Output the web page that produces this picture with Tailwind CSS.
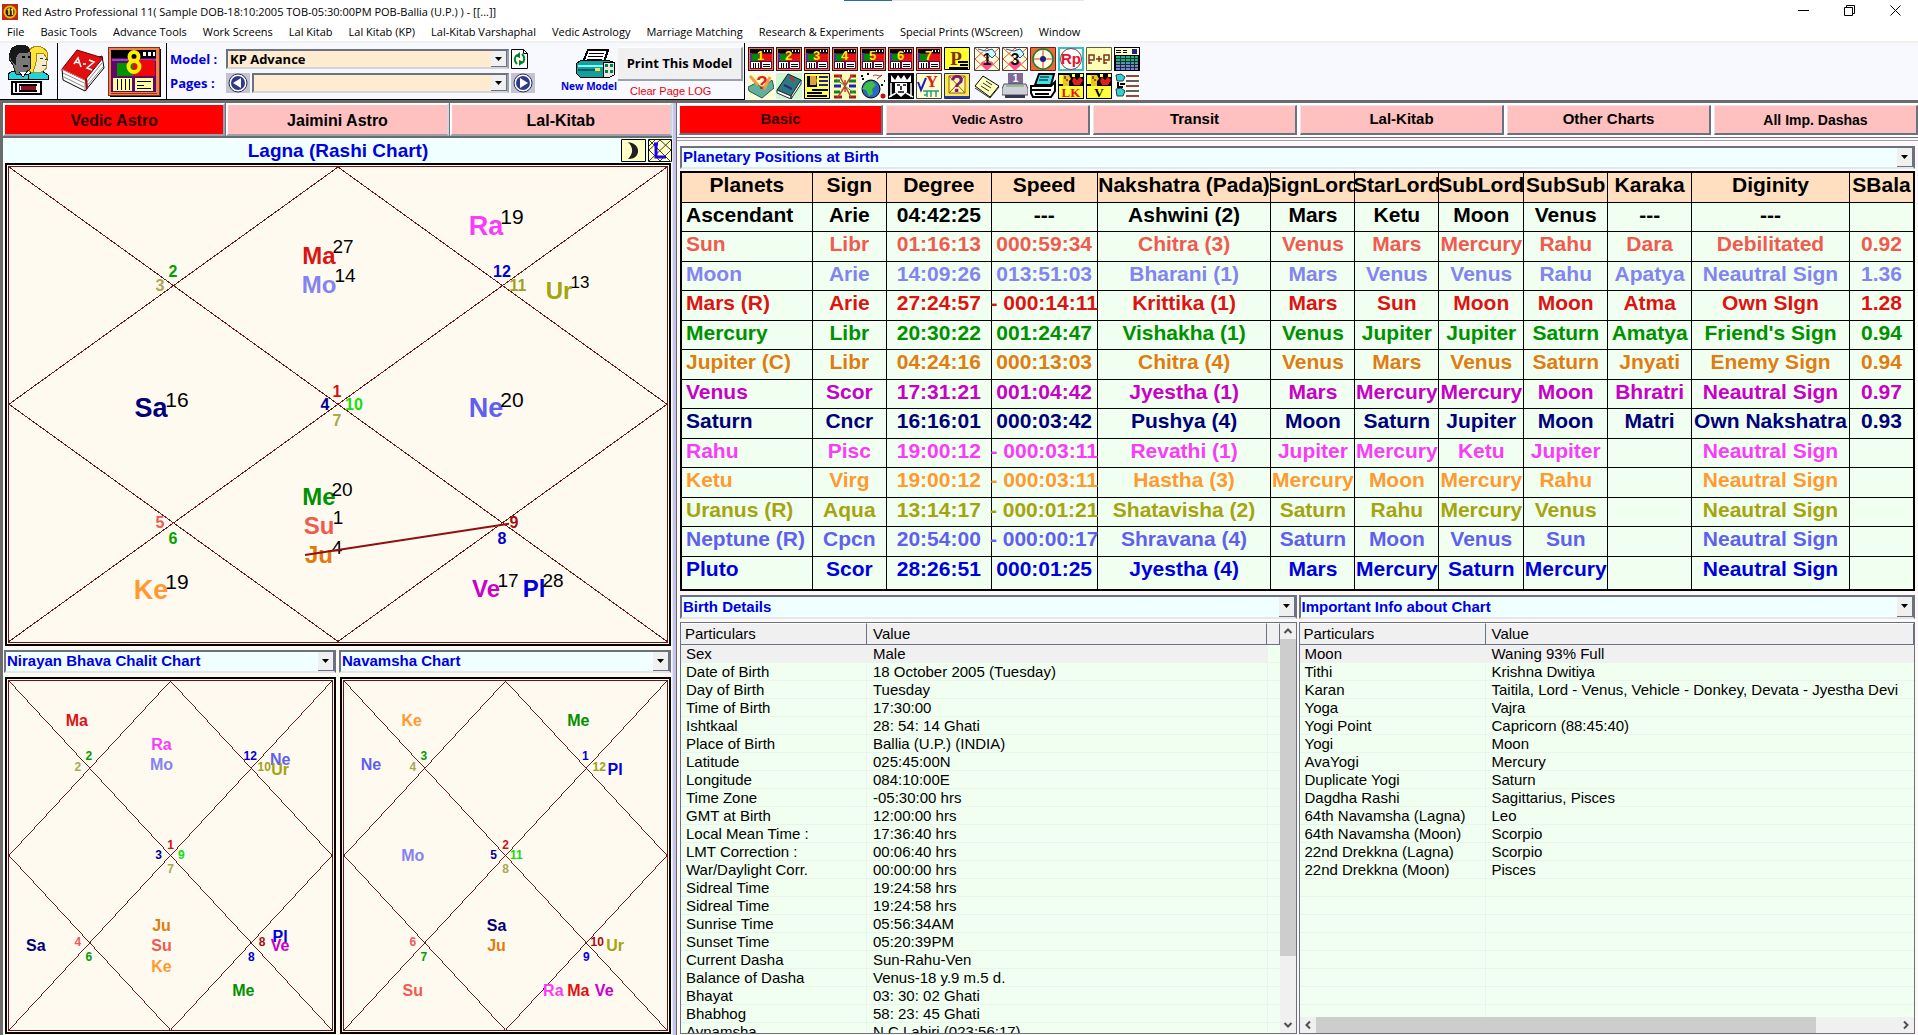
<!DOCTYPE html>
<html lang="en">
<head>
<meta charset="utf-8">
<title>Red Astro Professional 11</title>
<script src="https://cdn.jsdelivr.net/npm/@tailwindcss/browser@4"></script>
</head>
<body class="h-screen overflow-hidden flex flex-col bg-white text-black font-['Liberation_Sans',Arial,sans-serif]">

<header class="relative font-['Open_Sans','Noto_Sans',sans-serif] text-[11px]">
  <div class="absolute top-0 left-[44%] w-60 h-px bg-gray-200"><div class="w-12 h-px bg-[#2a6aa8]"></div></div>
  <div class="flex h-6">
    <svg class="ml-[2px] mt-1 size-4" viewBox="0 0 16 16"><rect width="16" height="16" fill="#c02a10"/><circle cx="8" cy="8" r="6.500" fill="#e8b818"/><circle cx="8" cy="8" r="4.500" fill="#382008"/><path d="M5.500 6l1.500-1v6M9 6l1.500-1v6" stroke="#ffe04a" stroke-width="1.500" fill="none"/></svg>
    <h1 class="ml-1 grow leading-6">Red Astro Professional 11( Sample DOB-18:10:2005 TOB-05:30:00PM POB-Ballia (U.P.) ) - [[...]]</h1>
    <div class="flex h-5">
      <button aria-label="Minimize" class="w-[46px] grid place-items-center"><svg class="size-[11px]" viewBox="0 0 11 11"><path d="M0 5.500h11" stroke="#000"/></svg></button>
      <button aria-label="Restore" class="w-[46px] grid place-items-center"><svg class="size-[11px]" viewBox="0 0 11 11"><path d="M.5 2.500h8v8h-8zM2.500 2.500v-2h8v8h-2" stroke="#000" fill="none"/></svg></button>
      <button aria-label="Close" class="w-[46px] grid place-items-center"><svg class="size-[11px]" viewBox="0 0 11 11"><path d="M.5.500l10 10M10.500.500l-10 10" stroke="#000"/></svg></button>
    </div>
  </div>
  <nav class="flex items-center gap-4 h-[19px] pl-[7px] border-b-2 border-[#f0f0f0] whitespace-nowrap">
    <a href="#">File</a><a href="#">Basic Tools</a><a href="#">Advance Tools</a><a href="#">Work Screens</a><a href="#">Lal Kitab</a><a href="#">Lal Kitab (KP)</a><a href="#">Lal-Kitab Varshaphal</a><a href="#">Vedic Astrology</a><a href="#">Marriage Matching</a><a href="#">Research &amp; Experiments</a><a href="#">Special Prints (WScreen)</a><a href="#">Window</a>
  </nav>
</header>

<div class="flex h-[59px] bg-[#f8f8ff] font-['Open_Sans','Noto_Sans',sans-serif]">
  <div class="w-[58px] h-[57px] border-r border-b border-black pl-2 pt-[2px]">
    <button aria-label="Horoscopes" class="block">
      <svg class="w-[42px] h-[50px]" viewBox="0 0 42 50" shape-rendering="crispEdges">
        <path d="M0 34v-5l5-3h8l7 4v4z" fill="#18d8e0" stroke="#000"/>
        <path d="M20 34v-4l5-4h9l6 4v4z" fill="#18d8e0" stroke="#000"/>
        <path d="M20 6c4-7 14-5 18 0l2 8-2 4 1 5-7 5-9-1z" fill="#f4ecc8" stroke="#b09020"/>
        <path d="M22 5c5-6 14-4 17 2l1 8-4-6-7-1-1 9-3 11-4-2z" fill="#ffe438" stroke="#a88810"/>
        <path d="M32 13h3M37 14h3M34 20h4" stroke="#303030"/>
        <path d="M2 8C3 0 14-2 20 2l3 8-1 14-6 5H8L5 20 1 14z" fill="#787878" stroke="#202020"/>
        <path d="M1 9C2 0 16-3 22 4l-2 4H11l-3 5v7l-4-3z" fill="#181818"/>
        <path d="M14 12h3M20 12h2M15 21h5" stroke="#000" stroke-width="2"/>
        <path d="M11 27l4 5 4-5" fill="#fff" stroke="#000"/>
        <path d="M4 36.500h29v12H4z" fill="#fff" stroke="#000" stroke-width="2"/>
        <path d="M8 38v9M11 40h18M11 46h18" stroke="#000" stroke-width="2"/><path d="M13 41h15v4H13z" fill="#901018"/><path d="M11 40v6" stroke="#101080"/>
      </svg>
    </button>
  </div>
  <div class="flex gap-[3px] w-[109px] h-[57px] border-r border-b border-black pl-[3px] pt-1">
    <button aria-label="Book" class="mt-[2px] self-start">
      <svg class="w-[44px] h-[43px]" viewBox="0 0 44 43">
        <path d="M1 20l1 11 22 11 19-23-2-12z" fill="#fff" stroke="#000"/>
        <path d="M2 24l21 10M3 28l20 10M25 34l16-20M25 38l17-20M24 33v8" stroke="#888" stroke-width="1"/>
        <path d="M1 20L16 1l26 8-18 22z" fill="#e01010" stroke="#700000"/>
        <path d="M1 20l23 11" stroke="#ff6060"/>
        <path d="M13 15l4-6 3 9M14 13l5 1M22 15h3M28 11l5 2-7 6 5 2" fill="none" stroke="#fff" stroke-width="1.500"/>
        <path d="M24 31l1 11 2-3-1-10z" fill="#a00808"/>
      </svg>
    </button>
    <button aria-label="Screen 8" class="self-start">
      <svg class="w-[53px] h-[50px]" viewBox="0 0 53 50" shape-rendering="crispEdges">
        <path d="M2 2h51v48H2z" fill="#000"/><path d="M0 0h51v48H0z" fill="#f08050" stroke="#803018"/>
        <path d="M3 3h45v8H3z"/><path d="M35 5h3v4h-3zM40 5h3v4h-3zM45 5h2v4h-2z" fill="#fff"/>
        <path d="M3 11h45v34H3z" fill="#600868"/><path d="M4 12h44v2H4z" fill="#9048c0"/>
        <path d="M9 16h16v13H9z" fill="#009000"/><path d="M25 13h22v16H25z" fill="#f00808"/>
        <path d="M5 31h19v13H5zM27 31h18v13H27z" fill="#ffffa0"/>
        <path d="M9.500 32v11M13.500 32v11M17.500 32v11M21.500 32v11M29 34.500h14M29 38.500h7M29 41.500h14" stroke="#000"/>
        <path d="M3 46h46" stroke="#a03020"/>
        <g fill="none" stroke="#ffee00" stroke-width="4" shape-rendering="auto"><circle cx="26" cy="9.500" r="4.500"/><circle cx="26" cy="19.500" r="5.500"/></g>
      </svg>
    </button>
  </div>
  <div class="flex w-[578px] h-[57px] border-r border-b border-black pl-[3px]">
    <div class="w-[390px] pt-[6px]">
      <div class="flex gap-[2px] h-5 mb-1 items-center">
        <label for="model" class="w-[54px] text-[13px] leading-4 font-bold text-[#0000e0]">Model :</label>
        <div class="flex w-[283px] h-5 bg-[#ffebd0] border-2 border-t-gray-500 border-l-gray-500 border-r-gray-400 border-b-gray-300">
          <select id="model" class="appearance-none grow px-[2px] text-[13px] leading-4 font-bold"><option>KP Advance</option></select>
          <span class="pointer-events-none grid place-items-center w-4 bg-[#f0f0f0] border-r border-b border-gray-500"><svg class="w-[7px] h-1" viewBox="0 0 7 4"><path d="M0 0h7L3.500 4z"/></svg></span>
        </div>
        <button aria-label="Refresh"><svg class="w-[17px] h-5" viewBox="0 0 17 20"><path d="M.5.500h12l4 4v15H.5z" fill="#fff" stroke="#000"/><path d="M12.500.500v4h4" fill="none" stroke="#000"/><path d="M6 15c-3-3-3-7 0-9M11 5c3 3 3 7 0 9" stroke="#008020" stroke-width="2" fill="none"/><path d="M4 7l5-4v6zM13 13l-5 4v-6z" fill="#008020"/></svg></button>
      </div>
      <div class="flex gap-[2px] h-5 items-center">
        <label for="pages" class="w-[54px] text-[13px] leading-4 font-bold text-[#0000e0]">Pages :</label>
        <button aria-label="Previous page"><svg class="w-6 h-5" viewBox="0 0 24 20"><path d="M0 0h24v20H0z" fill="#c4c4d0"/><circle cx="12" cy="10" r="9" fill="#fff" stroke="#282868"/><circle cx="12" cy="10" r="7" fill="#303888"/><path d="M15 5v10L7 10z" fill="#fff"/></svg></button>
        <div class="flex w-[257px] h-5 bg-[#ffebd0] border-2 border-t-gray-500 border-l-gray-500 border-r-gray-400 border-b-gray-300">
          <select id="pages" class="appearance-none grow px-[2px] text-[13px] leading-4 font-bold"><option></option></select>
          <span class="pointer-events-none grid place-items-center w-4 bg-[#f0f0f0] border-r border-b border-gray-500"><svg class="w-[7px] h-1" viewBox="0 0 7 4"><path d="M0 0h7L3.500 4z"/></svg></span>
        </div>
        <button aria-label="Next page"><svg class="w-6 h-5" viewBox="0 0 24 20"><path d="M0 0h24v20H0z" fill="#c4c4d0"/><circle cx="12" cy="10" r="9" fill="#fff" stroke="#282868"/><circle cx="12" cy="10" r="7" fill="#303888"/><path d="M9 5v10l8-5z" fill="#fff"/></svg></button>
      </div>
    </div>
    <button class="flex flex-col items-center w-[58px] pt-[6px] text-[10px] leading-4 font-bold text-[#0000e0] whitespace-nowrap">
      <svg class="w-10 h-[29px] ml-3" viewBox="0 0 40 29" shape-rendering="crispEdges">
        <path d="M13 1h20l-4 12H8z" fill="#fff" stroke="#000" stroke-width="2"/><path d="M14 4h15M13 7h15M12 10h15" stroke="#000"/>
        <path d="M2 14l5-3h25l6 2v11l-5 4H5l-4-4z" fill="#10a0a0" stroke="#000"/><path d="M3 16h25v2H3z" fill="#80ffff"/><path d="M3 21h22" stroke="#005858" stroke-width="2"/><path d="M20 19h5v3h-5z" fill="#ffe040"/>
        <path d="M28 13h11v13l-4 2h-7z" fill="#e8e8e8" stroke="#000"/><path d="M30 15h3v3h-3zM35 15h3v3h-3zM30 21h3v3h-3zM35 21h3v3h-3z" fill="#008040"/>
      </svg>
      <span>New Model</span>
    </button>
    <div class="flex flex-col w-[126px] pt-1 items-start">
      <button class="w-[125px] h-[34px] bg-[#f0f0f0] border-r-2 border-b-2 border-t border-t-white border-gray-400 text-[13px] font-bold">Print This Model</button>
      <button class="ml-3 mt-1 text-[11px] leading-3 text-red-600 font-['Liberation_Sans',Arial,sans-serif]">Clear Page LOG</button>
    </div>
  </div>
  <div class="pt-1 pl-[3px]">
    <div id="icons1" class="flex gap-[2px] h-6"></div>
    <div id="icons2" class="flex gap-[2px] h-[26px] mt-[2px]"></div>
  </div>
</div>

<main class="grow min-h-0 grid grid-cols-[672fr_4px_1242fr] border-t-[3px] border-[#6b6b6b]">

  <section class="min-w-0 min-h-0 flex flex-col border-l-[3px] border-[#6b6b6b] bg-[#fffaf0]">
    <div class="grid grid-cols-3 gap-px h-[35px] border-b-2 border-[#6b6b6b] bg-gray-500 text-base font-bold">
      <button class="pt-[2px] bg-[#ff0000] border-2 border-t-white border-l-white border-r-gray-400 border-b-gray-400 text-[#300000]">Vedic Astro</button>
      <button class="pt-[2px] bg-[#ffc0c0] border-2 border-t-white border-l-white border-r-gray-300 border-b-gray-400">Jaimini Astro</button>
      <button class="pt-[2px] bg-[#ffc0c0] border-2 border-t-white border-l-white border-r-gray-300 border-b-gray-400">Lal-Kitab</button>
    </div>
    <div class="flex h-[25px] bg-[#f0ffff]">
      <h2 class="grow pl-[52px] text-center text-[19px] leading-[25px] font-bold text-[#0000e0]">Lagna (Rashi Chart)</h2>
      <button aria-label="Moon chart" class="mr-[2px]"><svg class="w-[25px] h-6" viewBox="0 0 25 24"><path d="M.5.500h24v22H.5z" fill="#ffffc8" stroke="#000"/><path d="M7 3c9 1 12 8 9 13-2 3-5 4-9 4 5-5 6-11 0-17z" fill="#202020"/></svg></button>
      <button aria-label="Lagna chart"><svg class="w-6 h-6" viewBox="0 0 24 24"><path d="M.5.500h23v22H.5z" fill="#ffffc8" stroke="#000"/><path d="M1 7l6-6M1 1l22 22M23 1L1 22M12 1l11 10-11 11L1 11z" fill="none" stroke="#404020" stroke-width="1"/><path d="M8 5v13h10M6 5h4" stroke="#2000f0" stroke-width="3" fill="none"/></svg></button>
    </div>
    <div class="grow-[479] basis-0 min-h-0 ml-[2px] mr-px border-2 border-black p-px"><div id="lagna" class="relative h-full border border-[#701010]"></div></div>
    <div class="grid grid-cols-2 gap-[3px] mt-1 mb-1 px-px">
      <div class="flex h-[23px] bg-[#f0ffff] border-2 border-t-gray-500 border-l-gray-500 border-r-gray-500 border-b-gray-200">
        <select aria-label="Left chart" class="appearance-none grow pl-px text-[15px] leading-4 font-bold text-[#0000e0]"><option>Nirayan Bhava Chalit Chart</option></select>
        <span class="pointer-events-none grid place-items-center w-4 bg-[#f0f0f0] border-r border-b border-gray-500"><svg class="w-[7px] h-1" viewBox="0 0 7 4"><path d="M0 0h7L3.500 4z"/></svg></span>
      </div>
      <div class="flex h-[23px] bg-[#f0ffff] border-2 border-t-gray-500 border-l-gray-500 border-r-gray-500 border-b-gray-200">
        <select aria-label="Right chart" class="appearance-none grow pl-px text-[15px] leading-4 font-bold text-[#0000e0]"><option>Navamsha Chart</option></select>
        <span class="pointer-events-none grid place-items-center w-4 bg-[#f0f0f0] border-r border-b border-gray-500"><svg class="w-[7px] h-1" viewBox="0 0 7 4"><path d="M0 0h7L3.500 4z"/></svg></span>
      </div>
    </div>
    <div class="grow-[359] basis-0 min-h-0 grid grid-cols-2 gap-1 pl-[2px] pr-px pb-px">
      <div class="border-2 border-black p-px"><div id="bhava" class="relative h-full border border-[#701010]"></div></div>
      <div class="border-2 border-black p-px"><div id="navamsha" class="relative h-full border border-[#701010]"></div></div>
    </div>
  </section>

  <div class="bg-[#c4c4ec] border-l border-gray-200"></div>

  <section class="min-w-0 min-h-0 flex flex-col border-l border-[#6b6b6b] bg-[#fff8f8]">
    <div class="grid grid-cols-6 gap-[3px] h-[35px] pl-[2px] pt-[2px] pb-[2px] bg-white border-b border-gray-500 text-[15px] font-bold">
      <button class="bg-[#ff0000] border border-t-gray-200 border-l-gray-200 border-r-gray-500 border-b-gray-500 border-r-2 border-b-2 text-[#300000]">Basic</button>
      <button class="bg-[#ffc0c0] border border-t-gray-200 border-l-gray-200 border-r-gray-500 border-b-gray-500 border-r-2 border-b-2 text-[13px]">Vedic Astro</button>
      <button class="bg-[#ffc0c0] border border-t-gray-200 border-l-gray-200 border-r-gray-500 border-b-gray-500 border-r-2 border-b-2">Transit</button>
      <button class="bg-[#ffc0c0] border border-t-gray-200 border-l-gray-200 border-r-gray-500 border-b-gray-500 border-r-2 border-b-2">Lal-Kitab</button>
      <button class="bg-[#ffc0c0] border border-t-gray-200 border-l-gray-200 border-r-gray-500 border-b-gray-500 border-r-2 border-b-2">Other Charts</button>
      <button class="bg-[#ffc0c0] border border-t-gray-200 border-l-gray-200 border-r-gray-500 border-b-gray-500 border-r-2 border-b-2 text-sm">All Imp. Dashas</button>
    </div>
    <div class="grow min-h-0 flex flex-col mt-[2px] pt-[5px] pl-[3px] pr-[3px] pb-px border-t border-gray-400">
      <div class="flex h-6 bg-[#f0ffff] border-2 border-t-gray-500 border-l-gray-500 border-r-gray-500 border-b-gray-200">
        <select aria-label="Table shown" class="appearance-none grow pl-px text-[15px] leading-4 font-bold text-[#0000e0]"><option>Planetary Positions at Birth</option></select>
        <span class="pointer-events-none grid place-items-center w-4 bg-[#f0f0f0] border-r border-b border-gray-500"><svg class="w-[7px] h-1" viewBox="0 0 7 4"><path d="M0 0h7L3.500 4z"/></svg></span>
      </div>
      <div class="mt-[2px] border-2 border-black bg-[#f0fff0]">
        <table id="planets" class="w-full table-fixed border-separate border-spacing-0 text-[21px] leading-6 font-bold whitespace-nowrap"></table>
      </div>
      <div class="grow min-h-0 grid grid-cols-2 gap-x-[2px] grid-rows-[24px_1fr] mt-1">
        <div class="flex bg-[#f0ffff] border-2 border-t-gray-500 border-l-gray-500 border-r-gray-500 border-b-gray-200">
          <select aria-label="Left list" class="appearance-none grow pl-px text-[15px] leading-4 font-bold text-[#0000e0]"><option>Birth Details</option></select>
          <span class="pointer-events-none grid place-items-center w-4 bg-[#f0f0f0] border-r border-b border-gray-500"><svg class="w-[7px] h-1" viewBox="0 0 7 4"><path d="M0 0h7L3.500 4z"/></svg></span>
        </div>
        <div class="flex bg-[#f0ffff] border-2 border-t-gray-500 border-l-gray-500 border-r-gray-500 border-b-gray-200">
          <select aria-label="Right list" class="appearance-none grow pl-px text-[15px] leading-4 font-bold text-[#0000e0]"><option>Important Info about Chart</option></select>
          <span class="pointer-events-none grid place-items-center w-4 bg-[#f0f0f0] border-r border-b border-gray-500"><svg class="w-[7px] h-1" viewBox="0 0 7 4"><path d="M0 0h7L3.500 4z"/></svg></span>
        </div>
        <div class="flex min-h-0 mt-[3px] border border-gray-500 bg-[#f0fff0] overflow-hidden">
          <div class="grow min-w-0 overflow-hidden"><table id="birth" class="w-full table-fixed border-separate border-spacing-0 text-[15px] leading-[17px] whitespace-nowrap"></table></div>
          <div class="flex flex-col w-4 bg-[#f0f0f0]">
            <svg class="w-4 h-4" viewBox="0 0 16 16"><path d="M4.500 10L8 6.500l3.500 3.500" fill="none" stroke="#505050" stroke-width="2"/></svg>
            <div class="grow"><div class="h-[84%] bg-[#cdcdcd]"></div></div>
            <svg class="w-4 h-4" viewBox="0 0 16 16"><path d="M4.500 6L8 9.500 11.500 6" fill="none" stroke="#505050" stroke-width="2"/></svg>
          </div>
        </div>
        <div class="flex flex-col min-h-0 mt-[3px] border border-gray-500 bg-[#f0fff0] overflow-hidden">
          <div class="grow min-h-0 overflow-hidden"><table id="info" class="w-full table-fixed border-separate border-spacing-0 text-[15px] leading-[17px] whitespace-nowrap"></table></div>
          <div class="flex h-4 bg-[#f0f0f0]">
            <svg class="w-4 h-4" viewBox="0 0 16 16"><path d="M10 4.500L6.500 8l3.500 3.500" fill="none" stroke="#505050" stroke-width="2"/></svg>
            <div class="grow"><div class="h-4 w-[86%] bg-[#cdcdcd]"></div></div>
            <svg class="w-4 h-4" viewBox="0 0 16 16"><path d="M6 4.500L9.500 8 6 11.500" fill="none" stroke="#505050" stroke-width="2"/></svg>
          </div>
        </div>
      </div>
    </div>
  </section>
</main>

<script>
const $ = id => document.getElementById(id);
const C = { Su:'#f05a50', Mo:'#8484f0', Ma:'#dc1414', Me:'#009000', Ju:'#e07c10', Ve:'#c800c8', Sa:'#000078',
  Ra:'#fa3cfa', Ke:'#ff9932', Ur:'#a4a410', Ne:'#6060f0', Pl:'#0000dc', As:'#000000' };

/* North-Indian charts: labels carry a centre point on the chart's design grid (w x h) */
function chart(id, w, h, items, aspect) {
  const label = ([t, x, y, cls, color]) =>
    `<span class="absolute -translate-x-1/2 -translate-y-1/2 leading-none ${cls}" style="left:${x / w * 100}%;top:${y / h * 100}%;color:${color || C[t]}">${t}</span>`;
  $(id).innerHTML =
    `<svg class="absolute inset-0 w-full h-full" viewBox="0 0 ${w} ${h}" preserveAspectRatio="none" fill="none" stroke="#701818" shape-rendering="crispEdges">
      <path d="M0 0L${w} ${h}M${w} 0L0 ${h}M${w / 2} 0L${w} ${h / 2}L${w / 2} ${h}L0 ${h / 2}Z"/></svg>` +
    items.map(label).join('') + (aspect ? `<svg class="absolute inset-0 w-full h-full" viewBox="0 0 ${w} ${h}" preserveAspectRatio="none"><path d="${aspect}" stroke="#901010" stroke-width="2"/></svg>` : '');
}
const L = 'text-[27px] font-bold', M = 'text-2xl font-bold', N = 'text-base font-bold', D = 'text-[21px]', E = 'text-[19px]', F = 'text-[17px]', K = '#000';
const green = '#00a000', olive = '#a8a850', lime = '#10e010', brown = '#a01010', blue = '#0000d8', navy = '#000090', red = '#d81010', coral = '#f05858';
chart('lagna', 658, 472, [
  ['Ra',477,58,L],['19',503,48,D,K],['Ma',310,88,M],['27',334,78,E,K],['Mo',310,117,M],['14',336,107,E,K],
  ['Ur',550,123,M],['13',571,114,F,K],['Sa',142,239,L],['16',168,230,D,K],['Ne',477,239,L],['20',503,230,D,K],
  ['Me',310,328,M],['20',333,320,E,K],['Su',310,357,M],['1',329,348,E,K],['Ju',310,386,M],['4',328,378,E,K],
  ['Ke',142,420,L],['19',168,411,D,K],['Ve',477,419,M],['17',499,410,E,K],['Pl',525,419,M],['28',544,410,E,K],
  ['2',164,104,N,green],['3',151,118,N,olive],['12',493,104,N,blue],['11',509,118,N,'#a0a020'],
  ['1',328,223,N,red],['4',316,236,N,navy],['10',345,236,N,lime],['7',328,252,N,olive],
  ['5',151,354,N,coral],['6',164,370,N,green],['9',505,354,N,brown],['8',493,370,N,blue],
], 'M296 386L500 355');
const P = 'text-base font-bold', S = 'text-xs font-bold';
const houses = n => [
  [n[0],80,76,S,green],[n[1],69,87,S,olive],[n[2],242,76,S,blue],[n[3],256,87,S,'#a0a020'],
  [n[4],162,165,S,red],[n[5],150,175,S,navy],[n[6],173,175,S,lime],[n[7],162,189,S,olive],
  [n[8],69,263,S,coral],[n[9],80,278,S,green],[n[10],254,263,S,brown],[n[11],243,278,S,blue]];
chart('bhava', 324, 351, [...houses(['2','2','12','10','1','3','9','7','4','6','8','8']),
  ['Ma',68,40,P],['Ra',153,64,P],['Mo',153,85,P],['Ne',272,80,P],['Ur',272,90,P],
  ['Ju',153,246,P],['Su',153,267,P],['Ke',153,288,P],['Sa',27,267,P],['Pl',272,257,P],['Ve',272,267,P],['Me',235,312,P]]);
chart('navamsha', 324, 351, [...houses(['3','4','1','12','2','5','11','8','6','7','10','9']),
  ['Ke',68,40,P],['Me',235,40,P],['Ne',27,85,P],['Pl',272,90,P],['Mo',69,176,P],
  ['Sa',153,246,P],['Ju',153,267,P],['Ur',272,267,P],['Su',69,312,P],['Ra',210,312,P],['Ma',235,312,P],['Ve',261,312,P]]);

/* Planet table */
const cols = [['Planets',131],['Sign',74],['Degree',105],['Speed',106],['Nakshatra (Pada)',174],['SignLord',84],['StarLord',84],['SubLord',85],['SubSub',84],['Karaka',84],['Diginity',158],['SBala',63]];
const total = cols.reduce((s, c) => s + c[1], 0);
const rows = `As|Ascendant|Arie|04:42:25|---|Ashwini (2)|Mars|Ketu|Moon|Venus|---|---|
Su|Sun|Libr|01:16:13|000:59:34|Chitra (3)|Venus|Mars|Mercury|Rahu|Dara|Debilitated|0.92
Mo|Moon|Arie|14:09:26|013:51:03|Bharani (1)|Mars|Venus|Venus|Rahu|Apatya|Neautral Sign|1.36
Ma|Mars (R)|Arie|27:24:57|- 000:14:11|Krittika (1)|Mars|Sun|Moon|Moon|Atma|Own SIgn|1.28
Me|Mercury|Libr|20:30:22|001:24:47|Vishakha (1)|Venus|Jupiter|Jupiter|Saturn|Amatya|Friend's Sign|0.94
Ju|Jupiter (C)|Libr|04:24:16|000:13:03|Chitra (4)|Venus|Mars|Venus|Saturn|Jnyati|Enemy Sign|0.94
Ve|Venus|Scor|17:31:21|001:04:42|Jyestha (1)|Mars|Mercury|Mercury|Moon|Bhratri|Neautral Sign|0.97
Sa|Saturn|Cncr|16:16:01|000:03:42|Pushya (4)|Moon|Saturn|Jupiter|Moon|Matri|Own Nakshatra|0.93
Ra|Rahu|Pisc|19:00:12|- 000:03:11|Revathi (1)|Jupiter|Mercury|Ketu|Jupiter||Neautral Sign|
Ke|Ketu|Virg|19:00:12|- 000:03:11|Hastha (3)|Mercury|Moon|Mercury|Rahu||Neautral Sign|
Ur|Uranus (R)|Aqua|13:14:17|- 000:01:21|Shatavisha (2)|Saturn|Rahu|Mercury|Venus||Neautral Sign|
Ne|Neptune (R)|Cpcn|20:54:00|- 000:00:17|Shravana (4)|Saturn|Moon|Venus|Sun||Neautral Sign|
Pl|Pluto|Scor|28:26:51|000:01:25|Jyestha (4)|Mars|Mercury|Saturn|Mercury||Neautral Sign|`.split('\n').map(r => r.split('|'));
$('planets').innerHTML =
  `<colgroup>${cols.map(c => `<col style="width:${c[1] / total * 100}%">`).join('')}</colgroup>
  <thead><tr class="bg-[#ffdfc0]">${cols.map(c => `<th class="h-[30px] p-0 align-top border-r border-b border-black last:border-r-0"><div class="flex justify-center overflow-hidden">${c[0]}</div></th>`).join('')}</tr></thead>
  <tbody>${rows.map(([k, ...v], i) => `<tr class="${i == 12 ? 'h-8' : i % 2 ? 'h-[30px]' : 'h-[29px]'}" style="color:${C[k]}">${v.map((t, j) =>
    `<td class="p-0 align-top border-r border-black last:border-r-0 ${i == 12 ? '' : 'border-b'}"><div class="flex ${j ? 'justify-center' : 'pl-1'}">${t}</div></td>`).join('')}</tr>`).join('')}</tbody>`;

/* Particulars / Value lists */
function list(id, data, fill, tail) {
  const lines = data.split('\n').map(r => r.split('|'));
  while (lines.length < fill) lines.push(['', '']);
  const th = 'h-[22px] pl-1 text-left font-normal bg-[#f0f0f0] border-r border-b border-t border-t-white border-r-gray-500 border-b-gray-500';
  $(id).innerHTML = `<colgroup><col class="w-[186px]"><col>${tail ? '<col class="w-[13px]">' : ''}</colgroup>
    <thead><tr><th class="${th}">Particulars</th><th class="${th}"><span class="pl-[2px]">Value</span></th>${tail ? `<th class="${th}"></th>` : ''}</tr></thead>
    <tbody>${lines.map(([a, b], i) => `<tr class="h-[18px]">
      <td class="p-0 pl-[5px] border-r border-b border-[#e8f4ec] ${i ? '' : 'bg-[#f0f0f0]'}">${a}</td>
      <td class="p-0 pl-[6px] border-b border-[#e8f4ec] ${i ? '' : 'bg-[#f0f0f0]'}">${b}</td>${tail ? '<td class="p-0 border-b border-l border-[#e8f4ec]"></td>' : ''}</tr>`).join('')}</tbody>`;
}
list('birth', `Sex|Male
Date of Birth|18 October 2005 (Tuesday)
Day of Birth|Tuesday
Time of Birth|17:30:00
Ishtkaal|28: 54: 14 Ghati
Place of Birth|Ballia (U.P.) (INDIA)
Latitude|025:45:00N
Longitude|084:10:00E
Time Zone|-05:30:00 hrs
GMT at Birth|12:00:00 hrs
Local Mean Time :|17:36:40 hrs
LMT Correction :|00:06:40 hrs
War/Daylight Corr.|00:00:00 hrs
Sidreal Time|19:24:58 hrs
Sidreal Time|19:24:58 hrs
Sunrise Time|05:56:34AM
Sunset Time|05:20:39PM
Current Dasha|Sun-Rahu-Ven
Balance of Dasha|Venus-18 y.9 m.5 d.
Bhayat|03: 30: 02 Ghati
Bhabhog|58: 23: 45 Ghati
Aynamsha|N.C.Lahiri (023:56:17)`, 22, true);
list('info', `Moon|Waning 93% Full
Tithi|Krishna Dwitiya
Karan|Taitila, Lord - Venus, Vehicle - Donkey, Devata - Jyestha Devi
Yoga|Vajra
Yogi Point|Capricorn (88:45:40)
Yogi|Moon
AvaYogi|Mercury
Duplicate Yogi|Saturn
Dagdha Rashi|Sagittarius, Pisces
64th Navamsha (Lagna)|Leo
64th Navamsha (Moon)|Scorpio
22nd Drekkna (Lagna)|Scorpio
22nd Drekkna (Moon)|Pisces`, 22, false);

/* Toolbar icons */
const icon = (name, h, body) => `<button aria-label="${name}"><svg class="w-[26px] ${h == 24 ? 'h-6' : 'h-[26px]'}" viewBox="0 0 26 ${h}">${body}</svg></button>`;
const text = (t, x, y, size, color, font) => `<text x="${x}" y="${y}" font-size="${size}" font-weight="bold" text-anchor="middle" fill="${color}" font-family="${font || 'Liberation Sans'}">${t}</text>`;
const screen = n => icon('Screen ' + n, 24, `<g shape-rendering="crispEdges"><path d="M0 0h26v24H0z" fill="#401010"/><path d="M1 1h24v22H1z" fill="#f07848"/><path d="M2 2h22v4H2z"/><path d="M16 3h1v2h-1zM19 3h1v2h-1zM22 3h1v2h-1z" fill="#fff"/><path d="M2 6h22v16H2z" fill="#600848"/><path d="M3 7h8v7H3z" fill="#008800"/><path d="M11 7h13v7H11z" fill="#e81010"/><path d="M2 6h2v8H2z" fill="#5030a0"/><path d="M3 15h9v6H3zM14 15h9v6h-9z" fill="#fff"/><path d="M5.500 16v5M7.500 16v5M10.500 16v5M15 17.500h7M15 19.500h7" stroke="#000"/></g>` + text(n, 12.500, 13, 13, '#fff000'));
const kundli = n => icon('Chart ' + n, 24, `<path d="M.5.500h25v23H.5z" fill="#ffffd8" stroke="#404040"/><path d="M1 1l24 22M25 1L1 23M13 1l12 11-12 11L1 12z" stroke="#e04848" fill="none"/><path d="M4 2l8 2 6-2 4 5-4 4-4-4" fill="#c8ffff" stroke="#3048a0"/><path d="M7 16c2-3 5-1 6 1 1-2 5-4 6-1 0 3-4 5-6 8-2-3-6-5-6-8z" fill="#ff5090"/>` + text(n, 13, 18, 16, '#101010'));
const faces = (t, color) => icon(t, 26, `<path d="M0 0h26v26H0z"/><path d="M1 2h4v9H1zM14 1h3v3h-3zM22 1h3v3h-3z" fill="#ffff40"/><path d="M1 13h24v12H1z" fill="#ffff40"/><path d="M5 2h6l2 4-2 2v5H5z" fill="#f0c020"/><path d="M7 3v3M9 6v2" stroke="#000"/><path d="M16 4l3 3 3-3 3 3-3 5h-6l-2-4z" fill="#e02020"/>` + text(t, 13, 24, 13, color, 'Liberation Serif'));
$('icons1').innerHTML = ['1','2','3','4','5','6','7'].map(screen).join('') +
  icon('Print', 24, `<path d="M.5.500h25v22H.5z" fill="#ffff30" stroke="#000"/>${text('P', 12, 18, 19, '#803010', 'Liberation Serif')}<path d="M14 15h10M16 18h8M5 21h19" stroke="#000" stroke-width="2"/>`) +
  '<span></span>' +
  kundli('1') + kundli('3') +
  icon('Compass', 24, `<path d="M.5.500h25v23H.5z" fill="#f06838" stroke="#702010"/><circle cx="13" cy="12" r="10" fill="#ffffe0" stroke="#108030" stroke-width="1.500"/><path d="M13 3v18M4 12h18" stroke="#e03030"/><circle cx="13" cy="12" r="3" fill="#202080"/>`) +
  icon('Rp', 24, `<path d="M1 1h24v22H1z" fill="#fff8d8" stroke="#30c0d0" stroke-width="2"/><circle cx="13" cy="12" r="10.500" fill="#fff" stroke="#804040"/>${text('Rp', 13, 17, 15, '#e81030')}`) +
  icon('P+P', 24, `<path d="M.5.500h25v23H.5z" fill="#ffffb8" stroke="#606030"/><path d="M3 17v-9h5v5H3M3 16h3M18 17v-9h5v5h-5M18 16h3M10 12h6M13 9v6" fill="none" stroke="#803020" stroke-width="1.500"/>`) +
  icon('Table', 24, `<g shape-rendering="crispEdges"><path d="M0 0h26v24H0z"/><path d="M1 1h24v7H1z" fill="#ffffd0"/><path d="M2 3h5M9 3h4M2 5h5M9 5h4" stroke="#000"/><path d="M18 2h5v5h-5z" fill="#202090"/><path d="M2 9h22v7H2z" fill="#20b080"/><path d="M2 16h22v7H2z" fill="#8080d8"/><path d="M6.500 9v14M11.500 9v14M16.500 9v14M20.500 9v14M2 11.500h22M2 14.500h22M2 17.500h22M2 20.500h22" stroke="#103030"/></g>`);
$('icons2').innerHTML =
  icon('Help book', 26, `<path d="M0 0h26v26H0z" fill="#ffffd0"/><path d="M0 14l8-4 6 5 10-8 2 8-12 10L1 18z" fill="#60b0a0" stroke="#305848"/><path d="M2 3l8 9M22 4l-6 12" stroke="#f0a040" stroke-width="3"/>${text('?', 14, 16, 19, '#e82010')}`) +
  icon('Book', 26, `<path d="M0 0h26v26H0z" fill="#d0f8d0"/><path d="M1 17L12 1l13 6-10 16z" fill="#307880" stroke="#102020"/><path d="M1 17l14 6v3L1 20zM15 23L25 7v4L15 26z" fill="#fff" stroke="#203030"/><path d="M8 12l8 4" stroke="#203080" stroke-width="2"/><path d="M14 4l4 4" stroke="#e02020" stroke-width="2"/>`) +
  icon('Profile', 26, `<path d="M.5.500h25v25H.5z" fill="#ffff50" stroke="#000"/><path d="M3 3h10v11H3z"/><path d="M6 3h6l1 5-1 4H6z" fill="#e0a040"/><path d="M15 4h9M15 8h9M15 12h9" stroke="#2020a0" stroke-width="2"/><path d="M8 17h16M3 20h15M3 23h20" stroke="#000" stroke-width="2"/>`) +
  icon('Graph', 26, `<path d="M0 0h26v26H0z" fill="#ffffb0"/><path d="M2 3h8M18 3h6M2 24h8M17 24h7" stroke="#a02020" stroke-width="3"/><path d="M2 8h6M17 8h7M2 19h6M18 19h6" stroke="#108030" stroke-width="3"/><path d="M2 13h7M17 13h7" stroke="#2020c0" stroke-width="3"/><path d="M7 2l12 22M20 2L6 24M13 7v12" stroke="#c04040" fill="none" stroke-width="1.500"/><path d="M4 6l18 14" stroke="#40a040"/>`) +
  icon('Globe', 26, `<path d="M0 0h26v26H0z" fill="#fffff0"/><circle cx="11" cy="16" r="9" fill="#2868c8" stroke="#000"/><path d="M6 10l6-2 4 4-4 4 1 5-4 2-3-6-4-1z" fill="#40c040"/><path d="M1 3h2M7 1h2M2 6h2M21 12h2M24 8h1" stroke="#000" stroke-width="2"/><path d="M13 3c4-3 6 2 9-1M17 6l5-4" stroke="#a03030" fill="none"/><circle cx="23" cy="23" r="2.500" fill="#c01010"/>`) +
  icon('King', 26, `<path d="M0 0h26v26H0z"/><path d="M3 2l4 5 3-5 3 4 3-4 3 5 4-5v7H3z" fill="#fff"/><path d="M7 10h12v9l-6 5-6-5z" fill="#fff"/><path d="M9 12h3M15 12h3M13 13v4M10 19h6" stroke="#000" stroke-width="1.500"/><path d="M3 10v14M23 10v14M1 24l7-4M25 24l-7-4" stroke="#fff" stroke-width="1.500"/>`) +
  icon('Varshaphal', 26, `<path d="M.5.500h25v25H.5z" fill="#ffffd0" stroke="#404040"/>${text('Y', 16, 14, 17, '#d82020', 'Liberation Serif')}<path d="M2 9l3 8 5-12" stroke="#2020c0" fill="none" stroke-width="2"/><path d="M7 18h16M11 18v6M15 18v6M20 18v6M8 22h3" stroke="#20a080" fill="none" stroke-width="1.500"/>`) +
  icon('Prashna', 26, `<path d="M.5.500h25v25H.5z" fill="#ffe850" stroke="#203050"/><path d="M5 3h16v17H5zM5 3l16 17M21 3L5 20" fill="#fff8a0" stroke="#906010"/>${text('?', 13, 19, 23, '#801880')}<path d="M1 24h24" stroke="#2838b0" stroke-width="2"/>`) +
  '<span></span>' +
  icon('Pages', 26, `<path d="M1 13L9 3l16 10-9 11z" fill="#ffffc0" stroke="#000"/><path d="M1 15l15 10 9-11M9 10l8 5M7 13l8 5M12 8l6 4" stroke="#303010" fill="none"/>`) +
  icon('Print 1', 26, `<path d="M6 0h15v12H6z" fill="#806898"/><path d="M2 11h22l2 5v6H0v-6z" fill="#d0d0d8" stroke="#505060"/><path d="M4 13h18" stroke="#50b050"/><path d="M3 22h20v3H3z" fill="#383850"/>${text('1', 13.500, 9, 10, '#fff')}`) +
  icon('Printer', 26, `<path d="M9 1h15l-3 11H5z" fill="#40e0e8" stroke="#000" stroke-width="2"/><path d="M10 4h9M9 7h9" stroke="#000"/><path d="M1 13h20l4-4v9l-4 6H3l-2-4z" fill="#fff" stroke="#000" stroke-width="2"/><path d="M2 17h19M5 21h14" stroke="#000" stroke-width="2"/>`) +
  faces('LK', '#e81010') + faces('V', '#000') +
  icon('List', 26, `<path d="M0 0h26v26H0z" fill="#fffff4"/><path d="M12 3h13M12 13h13M12 23h13" stroke="#a04040" stroke-width="2"/><path d="M12 8h13M12 18h13" stroke="#606060" stroke-width="2"/><path d="M2 2l5-1 4 3-2 4H3zM2 16l5-1 4 3-2 5H3z" fill="#30d0d8" stroke="#204040"/><path d="M4 9v5h5M6 11h5" stroke="#000" fill="none" stroke-width="2"/>`);
</script>
</body>
</html>
